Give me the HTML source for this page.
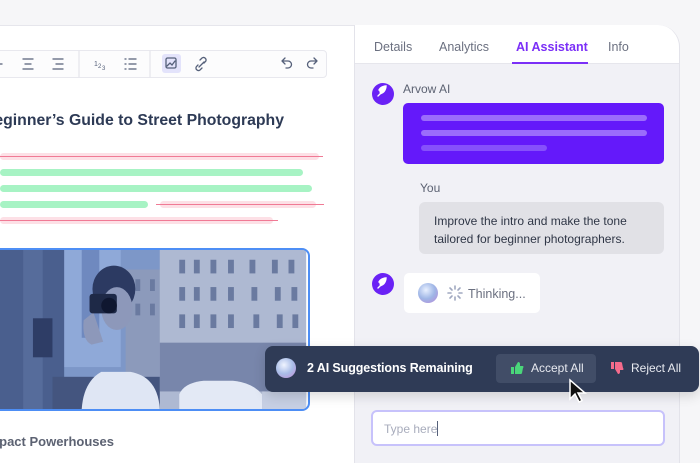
<!DOCTYPE html>
<html><head><meta charset="utf-8"><style>
*{margin:0;padding:0;box-sizing:border-box}
html,body{width:700px;height:463px;overflow:hidden}
body{background:#f6f6f8;font-family:"Liberation Sans",sans-serif;position:relative}
.abs{position:absolute}
.card{left:-20px;top:25px;width:700px;height:438px;background:#fff;border:1px solid #e6e6ec;border-bottom:none;border-top-right-radius:22px;overflow:hidden}
.panel{left:354px;top:25px;width:326px;height:438px;background:#f1f1f6;border-left:1px solid #e3e3ea;border-right:1px solid #e3e3ea;border-top-right-radius:22px;overflow:hidden}
.tabs{left:0;top:0;width:326px;height:39px;background:#fff;border-bottom:1px solid #e6e6ec}
.tab{top:15px;font-size:12.5px;color:#6b7080}
.bar{height:7px;border-radius:4px}
.pink{background:#fde0e6}
.green{background:#a7f3c4}
.strike{height:1px;background:#f07a95}
.tb{left:-10px;top:50px;width:337px;height:28px;border:1px solid #e8e8ee;border-radius:4px;background:#fcfcfd}
.av{width:22px;height:22px;border-radius:50%;background:#6a22f5}
</style></head><body>
<div class="abs card"></div>
<div class="abs tb"></div>
<svg class="abs" style="left:0;top:50px" width="330" height="28" viewBox="0 0 330 28" fill="none" stroke="#55607a" stroke-width="1.3" stroke-linecap="round">
<path d="M-2 14h4"/>
<path d="M23 9h10M25 14h6M23 19h10"/>
<path d="M53 9h10M56 14h7M53 19h10"/>
<path d="M79 1v26M150 1v26" stroke="#e6e6ec"/>
<text x="94" y="16" font-size="7" fill="#55607a" stroke="none" font-family="Liberation Sans">1</text><text x="98" y="18" font-size="6" fill="#55607a" stroke="none">2</text><text x="102" y="20" font-size="6" fill="#55607a" stroke="none">3</text>
<path d="M125 9h1M125 14h1M125 19h1M129 9h7M129 14h7M129 19h7"/>
<rect x="162" y="4" width="19" height="19" rx="3" fill="#e3e3fb" stroke="none"/>
<rect x="166" y="8" width="10" height="10" rx="1.5"/><path d="M167 16l3-3 2 2 3-4"/>
<path d="M198 15l-1.5 1.5a2.5 2.5 0 0 0 3.5 3.5l2-2M204 13l1.5-1.5a2.5 2.5 0 0 0-3.5-3.5l-2 2M199 17l5-5"/>
<path d="M282 11h6a3.5 3.5 0 0 1 0 7h-2M282 11l3-3M282 11l3 3"/>
<path d="M317 11h-6a3.5 3.5 0 0 0 0 7h2M317 11l-3-3M317 11l-3 3"/>
</svg>
<div class="abs" style="right:416px;top:112px;font-size:15.8px;font-weight:bold;color:#2d3a55;white-space:nowrap">A Beginner’s Guide to Street Photography</div>
<div class="abs bar pink" style="left:0;top:153px;width:319px"></div><div class="abs strike" style="left:0;top:156px;width:323px"></div>
<div class="abs bar green" style="left:0;top:169px;width:303px"></div>
<div class="abs bar green" style="left:0;top:185px;width:312px"></div>
<div class="abs bar green" style="left:0;top:201px;width:148px"></div>
<div class="abs bar pink" style="left:160px;top:201px;width:156px"></div><div class="abs strike" style="left:156px;top:204px;width:168px"></div>
<div class="abs bar pink" style="left:0;top:217px;width:273px"></div><div class="abs strike" style="left:0;top:220px;width:278px"></div>
<svg class="abs" style="left:-10px;top:248px;border:2px solid #4d8ef5;border-radius:8px;overflow:hidden" width="320" height="163" viewBox="0 0 320 163">
<rect width="320" height="163" fill="#7d97c8"/>
<rect x="70" y="0" width="60" height="120" fill="#8fa9d8"/>
<rect x="90" y="0" width="18" height="90" fill="#6f89bf"/>
<rect x="0" y="0" width="72" height="163" fill="#4a5f8e"/>
<rect x="30" y="0" width="20" height="163" fill="#566c9b"/>
<rect x="40" y="70" width="20" height="40" fill="#2e3d66"/>
<rect x="135" y="20" width="50" height="143" fill="#8c9abb"/>
<rect x="170" y="0" width="150" height="163" fill="#aeb9d2"/>
<g fill="#6a7aa0"><rect x="145" y="30" width="5" height="12"/><rect x="160" y="30" width="5" height="12"/><rect x="145" y="55" width="5" height="12"/><rect x="160" y="55" width="5" height="12"/>
<rect x="190" y="10" width="6" height="14"/><rect x="205" y="10" width="6" height="14"/><rect x="222" y="10" width="6" height="14"/><rect x="240" y="10" width="6" height="14"/><rect x="262" y="10" width="6" height="14"/><rect x="285" y="10" width="6" height="14"/><rect x="302" y="10" width="6" height="14"/>
<rect x="190" y="38" width="6" height="14"/><rect x="205" y="38" width="6" height="14"/><rect x="222" y="38" width="6" height="14"/><rect x="240" y="38" width="6" height="14"/><rect x="264" y="38" width="6" height="14"/><rect x="288" y="38" width="6" height="14"/><rect x="305" y="38" width="6" height="14"/>
<rect x="190" y="66" width="6" height="14"/><rect x="205" y="66" width="6" height="14"/><rect x="222" y="66" width="6" height="14"/><rect x="240" y="66" width="6" height="14"/><rect x="266" y="66" width="6" height="14"/><rect x="290" y="66" width="6" height="14"/><rect x="306" y="66" width="6" height="14"/></g>
<rect x="170" y="95" width="150" height="50" fill="#7886ab"/>
<rect x="60" y="130" width="110" height="33" fill="#44557f"/>
<path d="M190 163v-15q5-12 25-14h30q20 2 30 14v15z" fill="#e3e9f5"/><rect x="275" y="145" width="45" height="18" fill="#c6cfe3"/>
<ellipse cx="123" cy="40" rx="22" ry="24" fill="#2c3a62"/>
<ellipse cx="126" cy="60" rx="16" ry="22" fill="#8d98ba"/>
<path d="M100 97q-10-5-8-25l10-8 10 30z" fill="#8d98ba"/>
<path d="M90 163 Q92 135 110 125 L140 125 Q168 130 170 163Z" fill="#dfe6f4"/>
<rect x="98" y="45" width="28" height="20" rx="3" fill="#1e2947"/><circle cx="118" cy="57" r="8" fill="#0f1730"/>
</svg>
<div class="abs" style="right:586px;top:434px;font-size:13px;font-weight:bold;color:#5c6272;white-space:nowrap">Compact Powerhouses</div>
<div class="abs panel">
 <div class="abs tabs">
  <div class="abs tab" style="left:19px">Details</div>
  <div class="abs tab" style="left:84px">Analytics</div>
  <div class="abs tab" style="left:161px;color:#7b2ff7;font-weight:bold">AI Assistant</div>
  <div class="abs" style="left:157px;top:37px;width:76px;height:2px;background:#7b2ff7"></div>
  <div class="abs tab" style="left:253px">Info</div>
 </div>
 <div class="abs av" style="left:17px;top:58px"></div>
 <div class="abs" style="left:48px;top:57px;font-size:12px;color:#5c6272">Arvow AI</div>
 <div class="abs" style="left:48px;top:78px;width:261px;height:61px;background:#6419fa;border-radius:5px"></div>
 <div class="abs" style="left:66px;top:90px;width:226px;height:6px;border-radius:3px;background:#9b6cfb"></div>
 <div class="abs" style="left:66px;top:105px;width:226px;height:6px;border-radius:3px;background:#9b6cfb"></div>
 <div class="abs" style="left:66px;top:120px;width:126px;height:6px;border-radius:3px;background:#8650fb"></div>
 <div class="abs" style="left:65px;top:156px;font-size:12px;color:#5c6272">You</div>
 <div class="abs" style="left:64px;top:177px;width:245px;height:52px;background:#e1e1e6;border-radius:6px;padding:10px 15px;font-size:12px;line-height:18px;color:#2f3646">Improve the intro and make the tone tailored for beginner photographers.</div>
 <div class="abs av" style="left:17px;top:248px"></div>
 <div class="abs" style="left:49px;top:248px;width:136px;height:40px;background:#fff;border-radius:5px"></div>
 <div class="abs" style="left:63px;top:258px;width:20px;height:20px;border-radius:50%;background:radial-gradient(circle at 40% 35%,#e8f0ff,#9fb6e6 50%,#b987d8)"></div>
 <svg class="abs" style="left:91px;top:259px" width="18" height="18" stroke="#a0a8c0" stroke-width="1.6" stroke-linecap="round"><path d="M9 2v3M9 13v3M2 9h3M13 9h3M4 4l2 2M12 12l2 2M4 14l2-2M12 6l2-2"/></svg>
 <div class="abs" style="left:113px;top:262px;font-size:12.5px;color:#6b7080">Thinking...</div>
 <div class="abs" style="left:16px;top:385px;width:294px;height:36px;background:#fff;border:2px solid #c7c2fb;border-radius:6px;padding:9px 11px;font-size:12px;color:#a8acbc">Type here<span style="display:inline-block;width:1px;height:15px;background:#55607a;vertical-align:-3px"></span></div>
</div>
<svg class="abs" style="left:371px;top:81px" width="22" height="22"><path d="M7 15l5-5M8 9c2-4 7-4 7-4s0 5-4 7l-2 1" fill="#fff" stroke="#fff" stroke-width="1.4" stroke-linecap="round"/></svg>
<svg class="abs" style="left:371px;top:273px" width="22" height="22"><path d="M7 15l5-5M8 9c2-4 7-4 7-4s0 5-4 7l-2 1" fill="#fff" stroke="#fff" stroke-width="1.4" stroke-linecap="round"/></svg>
<div class="abs" style="left:265px;top:346px;width:434px;height:46px;background:#2f3b56;border-radius:8px;box-shadow:0 4px 12px rgba(0,0,0,.15)"></div>
<div class="abs" style="left:276px;top:358px;width:20px;height:20px;border-radius:50%;background:radial-gradient(circle at 40% 35%,#f0f4ff,#a9bde8 50%,#c48ad6)"></div>
<div class="abs" style="left:307px;top:361px;font-size:12.5px;color:#fff;font-weight:bold;letter-spacing:-.1px">2 AI Suggestions Remaining</div>
<div class="abs" style="left:496px;top:354px;width:100px;height:29px;background:#414d67;border-radius:4px"></div>
<svg class="abs" style="left:510px;top:361px" width="14" height="14"><path d="M1 6h3v7H1zM5 6l3-5q2 0 2 2v2h3q1 1 0 2l-1 5q0 1-2 1H5z" fill="#4ad67a"/></svg>
<div class="abs" style="left:531px;top:361px;font-size:12px;color:#e8eaf0">Accept All</div>
<svg class="abs" style="left:610px;top:361px" width="14" height="14"><path d="M1 1h3v7H1zM5 8l3 5q2 0 2-2V9h3q1-1 0-2l-1-5q0-1-2-1H5z" fill="#f56b8c"/></svg>
<div class="abs" style="left:631px;top:361px;font-size:12px;color:#e8eaf0">Reject All</div>
<svg class="abs" style="left:568px;top:378px" width="22" height="28"><path d="M2 2v19l5-5 4 8 3-1.5-4-7.5h7z" fill="#111" stroke="#fff" stroke-width="1.5"/></svg>
</body></html>
